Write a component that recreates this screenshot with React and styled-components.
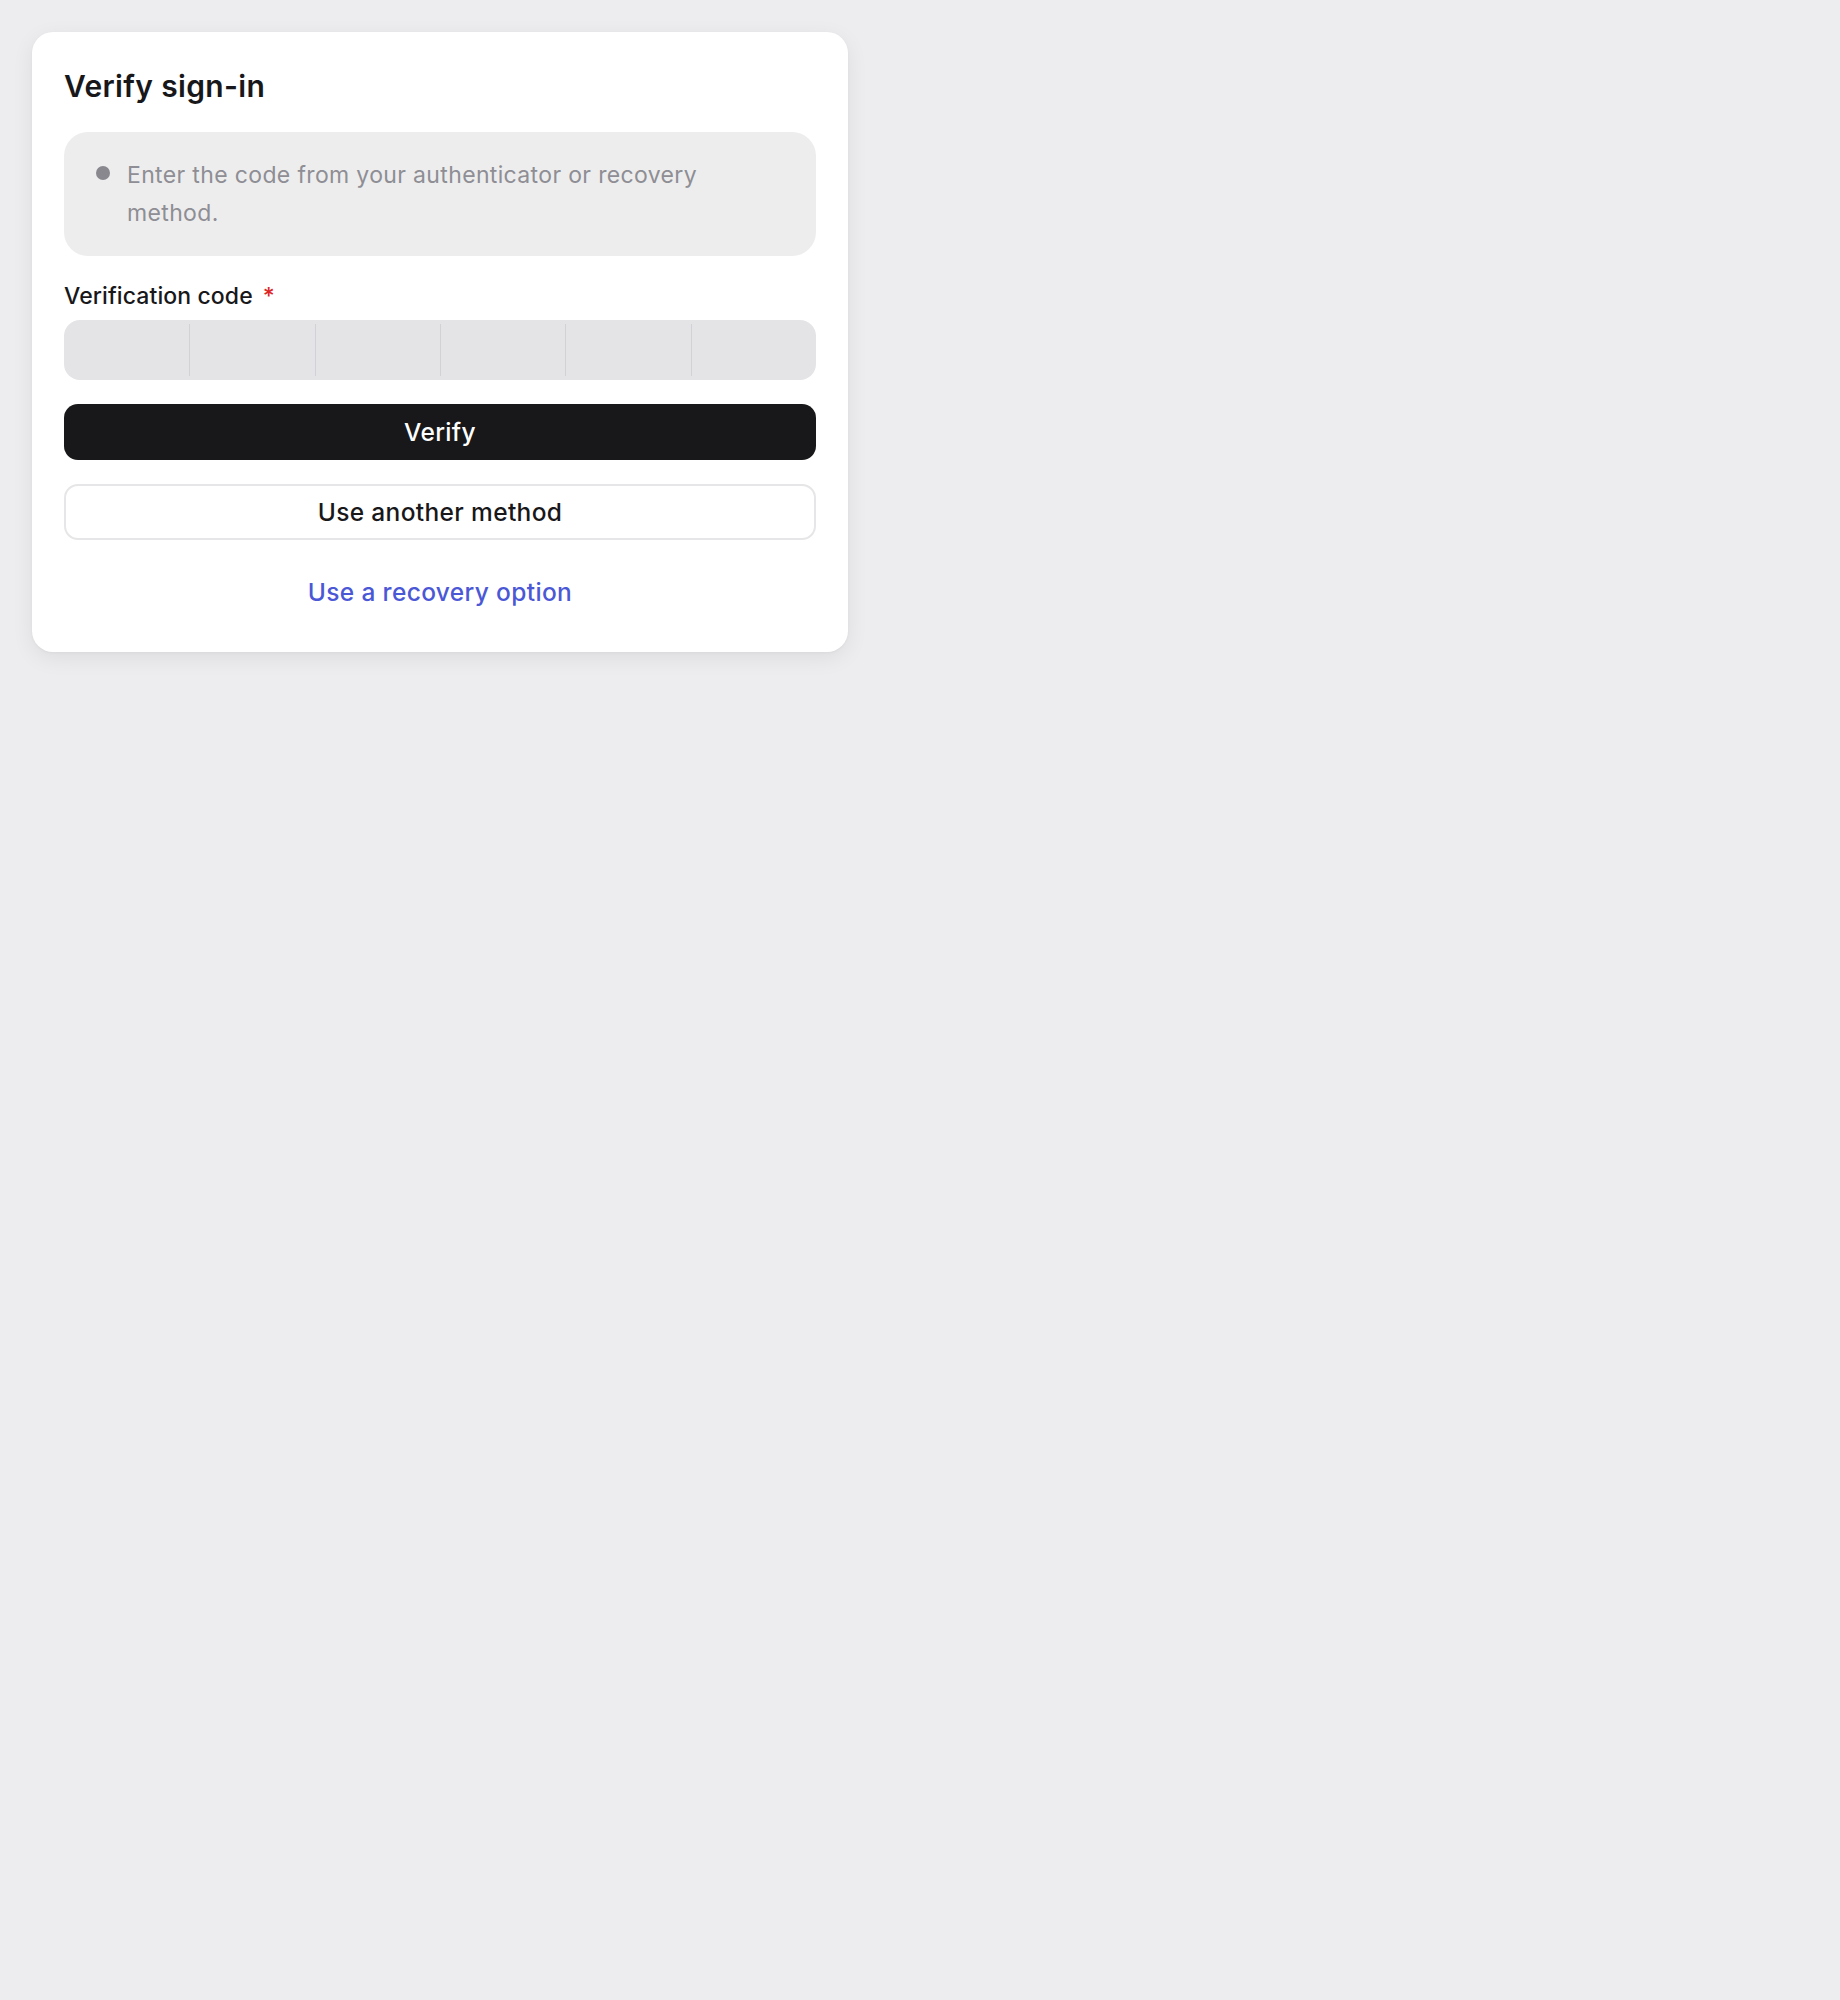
import React from 'react';
import styled, { createGlobalStyle } from 'styled-components';

const GlobalStyle = createGlobalStyle`
    html, body {
        margin: 0;
        background: #ededef;
        font-family: 'Inter', 'Liberation Sans', sans-serif;
        -webkit-font-smoothing: antialiased;
    }
`;

const Page = styled.div`
    padding: 32px;
    min-height: 2000px;
    box-sizing: border-box;
`;

const Card = styled.div`
    width: 816px;
    box-sizing: border-box;
    background: #ffffff;
    border-radius: 21px;
    padding: 32px;
    box-shadow: 0 6px 22px rgba(0, 0, 0, 0.07), 0 1px 3px rgba(0, 0, 0, 0.04);
    display: flex;
    flex-direction: column;
`;

const Title = styled.h1`
    margin: 0 0 24px;
    font-size: 30px;
    line-height: 44px;
    font-weight: 600;
    color: #18181b;
    letter-spacing: 0.35px;
`;

const Notice = styled.div`
    background: #ededee;
    border-radius: 24px;
    padding: 24px 32px;
    display: flex;
    align-items: flex-start;
    gap: 17px;
    margin-bottom: 24px;
`;

const Dot = styled.span`
    flex: none;
    width: 14px;
    height: 14px;
    border-radius: 50%;
    background: #88888e;
    margin-top: 10px;
`;

const NoticeText = styled.p`
    margin: 0;
    max-width: 600px;
    font-size: 23px;
    line-height: 38px;
    letter-spacing: 0.35px;
    color: #8e8e94;
`;

const Label = styled.label`
    display: block;
    font-size: 23px;
    line-height: 32px;
    font-weight: 500;
    letter-spacing: 0.1px;
    color: #18181b;
    margin-bottom: 8px;
`;

const Required = styled.span`
    color: #dc2626;
    margin-left: 10px;
`;

const CodeRow = styled.div`
    display: grid;
    grid-template-columns: repeat(6, 1fr);
    height: 60px;
    background: #e4e4e7;
    border-radius: 16px;
    overflow: hidden;
    margin-bottom: 24px;
`;

const CodeCell = styled.input`
    min-width: 0;
    border: none;
    border-left: ${p => (p.$first ? 'none' : '1.5px solid #d2d2d6')};
    margin: 4px 0;
    background: transparent;
    font-family: inherit;
    font-size: 26px;
    text-align: center;
    color: #18181b;
    outline: none;
`;

const Button = styled.button`
    height: 56px;
    width: 100%;
    border-radius: 14px;
    font-family: inherit;
    font-size: 24.5px;
    font-weight: 500;
    letter-spacing: 0.35px;
    cursor: pointer;
    margin-bottom: 24px;
    background: ${p => (p.$primary ? '#18181a' : '#ffffff')};
    color: ${p => (p.$primary ? '#ffffff' : '#18181b')};
    border: ${p => (p.$primary ? 'none' : '2px solid #e6e6e8')};
`;

const LinkButton = styled.button`
    height: 56px;
    width: 100%;
    border: none;
    background: transparent;
    font-family: inherit;
    font-size: 24.5px;
    font-weight: 500;
    letter-spacing: 0.35px;
    color: #4b58d6;
    cursor: pointer;
`;

const App = () => (
    <Page>
        <GlobalStyle />
        <Card>
            <Title>Verify sign-in</Title>
            <Notice>
                <Dot />
                <NoticeText>Enter the code from your authenticator or recovery method.</NoticeText>
            </Notice>
            <Label>
                Verification code<Required>*</Required>
            </Label>
            <CodeRow>
                {[0, 1, 2, 3, 4, 5].map(i => (
                    <CodeCell key={i} $first={i === 0} maxLength={1} aria-label={`Digit ${i + 1}`} />
                ))}
            </CodeRow>
            <Button $primary>Verify</Button>
            <Button>Use another method</Button>
            <LinkButton>Use a recovery option</LinkButton>
        </Card>
    </Page>
);

export default App;
